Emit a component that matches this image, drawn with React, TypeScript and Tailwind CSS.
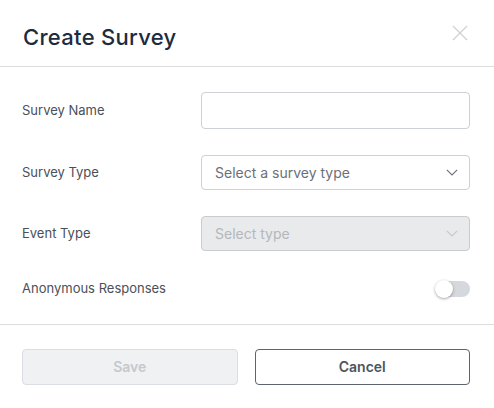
function Chevron({ className }: { className?: string }) {
  return (
    <svg width="12" height="7" viewBox="0 0 12 7" fill="none" stroke="currentColor" strokeWidth="1.2" className={className}>
      <path d="M0.8 0.8L6 6L11.2 0.8" />
    </svg>
  );
}

function FieldRow({ label, children }: { label: string; children: React.ReactNode }) {
  return (
    <div className="flex items-center">
      <div className="w-[179px] text-[13px] text-[#4b5058]">{label}</div>
      <div className="flex-1">{children}</div>
    </div>
  );
}

export default function App() {
  return (
    <div
      className="w-[494px] h-[408px] bg-white"
      style={{ fontFamily: 'Inter, "Open Sans", sans-serif' }}
    >
      <div className="flex h-[67px] items-center justify-between border-b border-[#dcdde1] pl-[23px] pr-[26px]">
        <h2 className="mt-[8px] text-[22px] font-medium tracking-[0.3px] text-[#1c2b3f]">Create Survey</h2>
        <button className="text-[#cfd1d5]">
          <svg width="16" height="16" viewBox="0 0 16 16" fill="none" stroke="currentColor" strokeWidth="1.3">
            <path d="M1 1L15 15M15 1L1 15" />
          </svg>
        </button>
      </div>

      <div className="flex flex-col gap-[26px] pl-[22px] pr-[24px] pt-[25px] pb-[25px] border-b border-[#dcdde1]">
        <FieldRow label="Survey Name">
          <input className="h-[37px] w-full rounded-[4px] border border-[#cdd0d5] px-3 text-sm outline-none" />
        </FieldRow>
        <FieldRow label="Survey Type">
          <div className="flex h-[35px] w-full items-center justify-between rounded-[4px] border border-[#cdd0d5] pl-[13px] pr-[11px] text-[14px] text-[#6b7079]">
            <span>Select a survey type</span>
            <Chevron className="text-[#6f747c]" />
          </div>
        </FieldRow>
        <FieldRow label="Event Type">
          <div className="flex h-[35px] w-full items-center justify-between rounded-[4px] border border-[#c8cbd0] bg-[#e9eaec] pl-[13px] pr-[11px] text-[14px] text-[#b4b7bc]">
            <span>Select type</span>
            <Chevron className="text-[#c6c9ce]" />
          </div>
        </FieldRow>
        <div className="mt-[2px] flex items-center justify-between">
          <span className="text-[13px] text-[#4b5058]">Anonymous Responses</span>
          <div className="relative h-[16px] w-[34px] rounded-full bg-[#d5d8dc]">
            <div className="absolute left-[-1px] top-[-1px] h-[18px] w-[18px] rounded-full bg-white shadow-[0_1px_3px_rgba(0,0,0,0.35)]" />
          </div>
        </div>
      </div>

      <div className="flex gap-[17px] pl-[22px] pr-[24px] pt-[24px]">
        <button className="h-[36px] flex-1 rounded-[4px] border border-[#dadde1] bg-[#f0f1f3] text-[14px] font-semibold text-[#c5c8cd]">
          Save
        </button>
        <button className="h-[36px] flex-1 rounded-[4px] border border-[#5c6470] bg-white text-[14px] font-semibold text-[#4d5560]">
          Cancel
        </button>
      </div>
    </div>
  );
}
